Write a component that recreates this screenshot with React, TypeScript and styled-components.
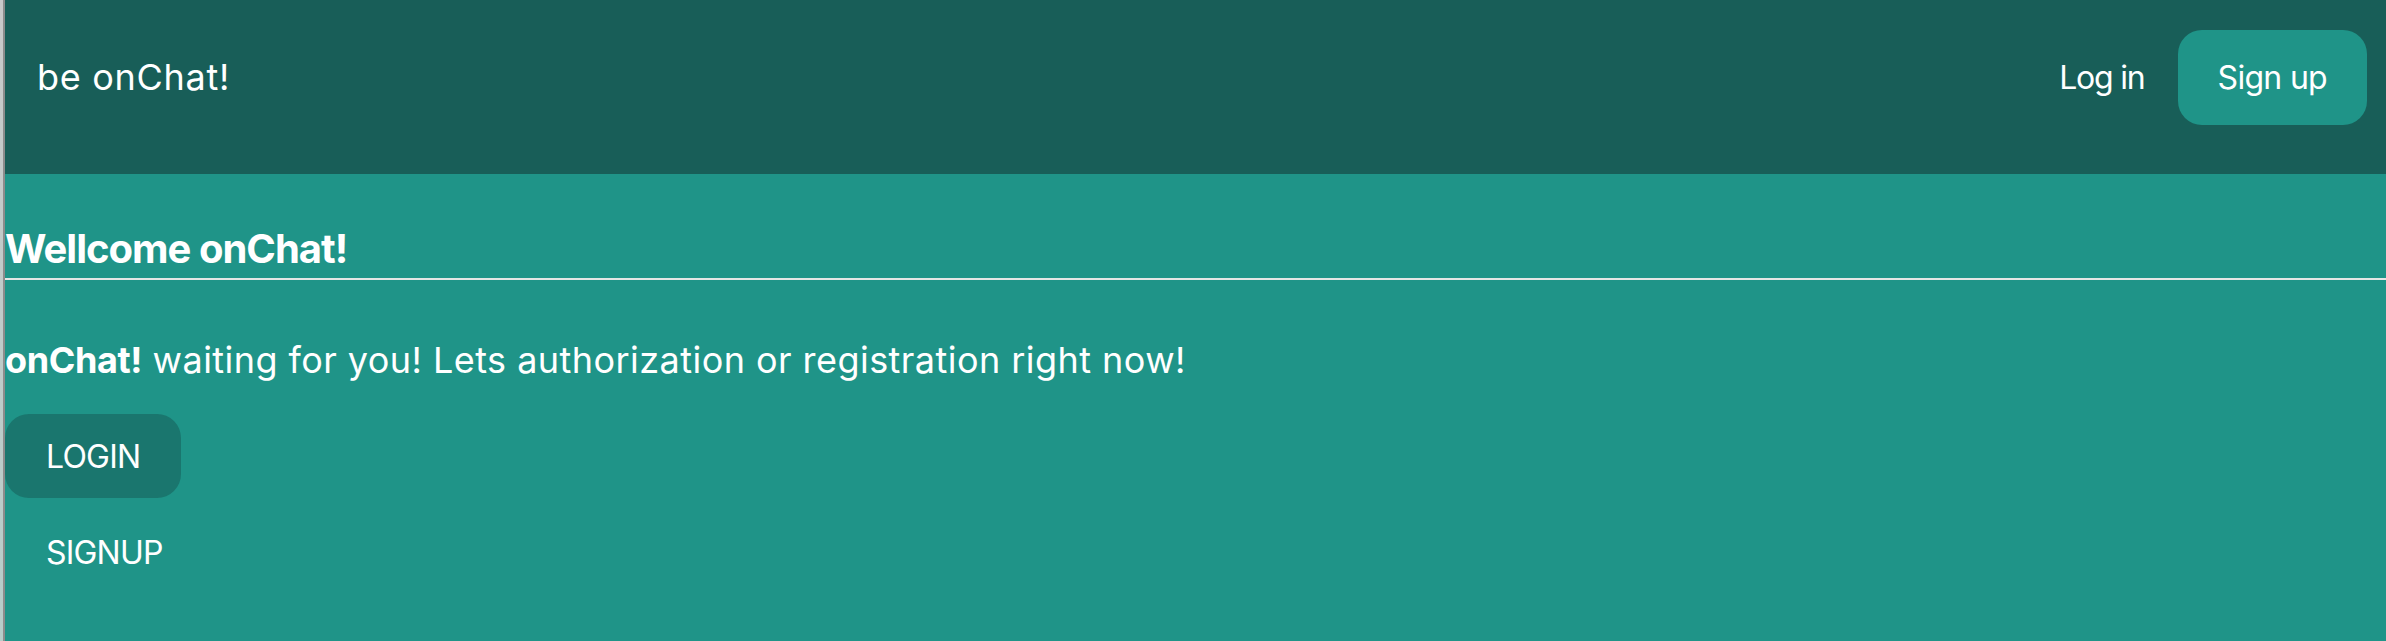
import React from "react";
import styled, { createGlobalStyle } from "styled-components";

const Global = createGlobalStyle`
  html, body {
    margin: 0;
    padding: 0;
    height: 100%;
    background: #1f9488;
  }
  body {
    font-family: Inter, "Noto Sans", "Liberation Sans", sans-serif;
    color: #ffffff;
  }
  #root {
    min-height: 100%;
  }
`;

const Frame = styled.div`
  display: flex;
  min-height: 641px;
`;

const WindowEdge = styled.div`
  width: 3px;
  flex: none;
  background: linear-gradient(#c9c9c9, #b6cdc9);
  border-right: 2px solid #8c8c8c;
`;

const Main = styled.div`
  flex: 1;
  display: flex;
  flex-direction: column;
  background: #1f9488;
`;

const TopBar = styled.header`
  display: flex;
  align-items: center;
  justify-content: space-between;
  height: 174px;
  box-sizing: border-box;
  padding: 30px 19px 49px 32px;
  background: #185e58;
`;

const Brand = styled.div`
  font-size: 36px;
  line-height: 95px;
  font-weight: 400;
  letter-spacing: 0.7px;
`;

const NavActions = styled.nav`
  display: flex;
  align-items: center;
  gap: 33px;
`;

const NavLink = styled.a<{ $filled?: boolean }>`
  display: inline-flex;
  align-items: center;
  height: 95px;
  padding: ${(p) => (p.$filled ? "0 40px" : "0")};
  border-radius: 24px;
  background: ${(p) => (p.$filled ? "#1f9488" : "transparent")};
  color: #ffffff;
  font-size: 32px;
  letter-spacing: ${(p) => (p.$filled ? "-0.7px" : "-1.2px")};
  text-decoration: none;
`;

const Content = styled.section`
  display: flex;
  flex-direction: column;
  align-items: flex-start;
  padding-top: 51px;
`;

const Title = styled.h3`
  align-self: stretch;
  margin: 0;
  padding-bottom: 5px;
  font-size: 40px;
  line-height: 48px;
  font-weight: 700;
  letter-spacing: -1px;
  border-bottom: 2px solid #e4e6e5;
`;

const Lead = styled.p`
  margin: 58px 0 0;
  font-size: 36px;
  line-height: 44px;
  font-weight: 400;
  letter-spacing: 0.45px;

  strong {
    font-weight: 700;
    letter-spacing: -0.4px;
  }
`;

const ActionList = styled.div`
  display: flex;
  flex-direction: column;
  align-items: flex-start;
  gap: 12px;
  margin-top: 32px;
`;

const ActionButton = styled.button<{ $active?: boolean }>`
  display: inline-flex;
  align-items: center;
  height: 84px;
  padding: 0 41px;
  border: none;
  border-radius: 24px;
  background: ${(p) => (p.$active ? "#1a766e" : "transparent")};
  color: #ffffff;
  font-family: inherit;
  font-size: 32px;
  letter-spacing: -0.8px;
  cursor: pointer;
`;

export default function App() {
  return (
    <>
      <Global />
      <Frame>
        <WindowEdge />
        <Main>
          <TopBar>
            <Brand>be onChat!</Brand>
            <NavActions>
              <NavLink href="#">Log in</NavLink>
              <NavLink href="#" $filled>
                Sign up
              </NavLink>
            </NavActions>
          </TopBar>
          <Content>
            <Title>Wellcome onChat!</Title>
            <Lead>
              <strong>onChat!</strong> waiting for you! Lets authorization or
              registration right now!
            </Lead>
            <ActionList>
              <ActionButton $active>LOGIN</ActionButton>
              <ActionButton>SIGNUP</ActionButton>
            </ActionList>
          </Content>
        </Main>
      </Frame>
    </>
  );
}
